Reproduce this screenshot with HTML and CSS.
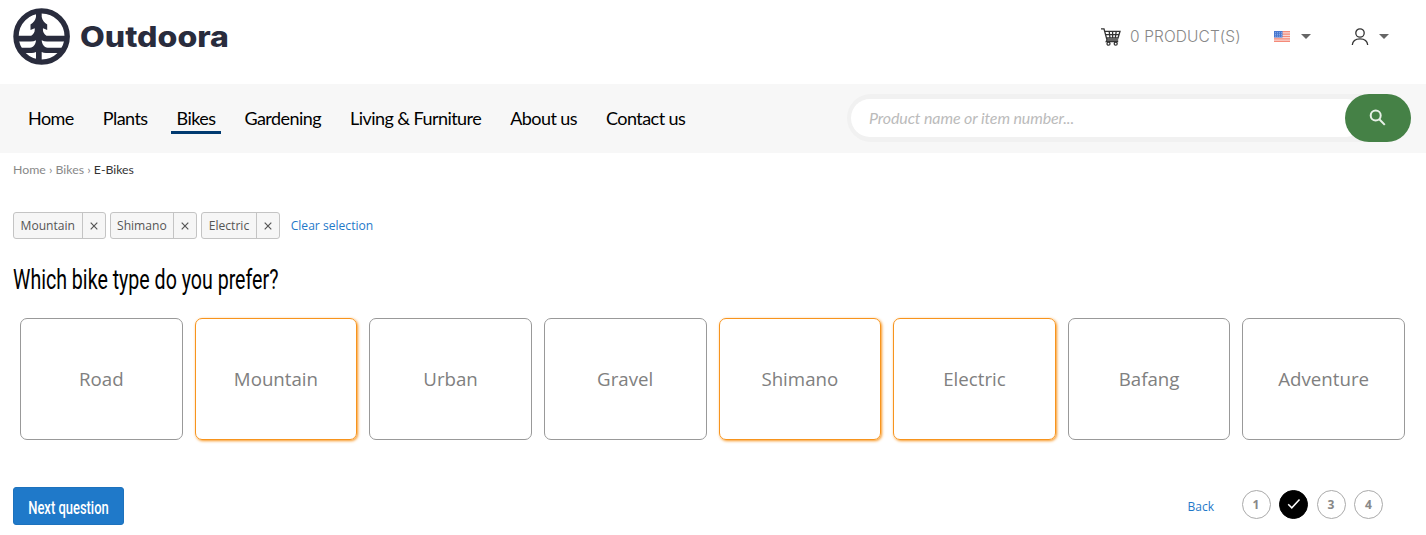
FILE: index.html
```html
<!DOCTYPE html>
<html lang="en">
<head>
    <meta charset="UTF-8">
    <meta name="viewport" content="width=device-width, initial-scale=1.0">
    <title>Outdoora - E-Bikes</title>
    <link rel="stylesheet" href="styles.css">
</head>
<body>
    <header class="header">
        <a class="logo" href="#">
            <svg width="220" height="60" viewBox="0 0 220 60">
                <defs>
                    <clipPath id="logo-circle"><circle cx="28.6" cy="29.5" r="27"/></clipPath>
                </defs>
                <circle cx="28.6" cy="29.5" r="25.6" fill="none" stroke="#292c3d" stroke-width="5.400"/>
                <g clip-path="url(#logo-circle)" fill="#292c3d">
                    <path d="M23 2h5.700v8c.6 3.500 2.500 5.500 5.500 7.500V23l-4.200-1.700c-.4 3.200.8 5.700 3.500 7.400H58V34.500H34c-2 0-3.800-.4-5.300-1.200.3 4.200 2.300 6.900 6 7.500H58v5.200H33c-1.600 0-3-.4-4.300-1.100V58H23V44.900c-1.300.7-2.700 1.100-4.300 1.100H0v-5.200h17c3.700-.6 5.700-3.300 6-7.500-1.500.8-3.300 1.200-5.300 1.200H0v-5.800h18.200c2.700-1.700 3.900-4.200 3.500-7.400L17.500 23v-5.500c3-2 4.900-4 5.500-7.500z"/>
                </g>
                <text class="logo-text" x="67" y="40" textLength="149" lengthAdjust="spacingAndGlyphs">Outdoora</text>
            </svg>
        </a>
        <div class="tools">
            <a class="cart" href="#">
                <svg width="20" height="18" viewBox="0 0 20 18" fill="none" stroke="#333" stroke-width="1.300">
                    <path d="M0 .8h3l3 11.200h11.200M3.700 3.300h15.300l-2 6.700H5.500M4.600 6.600h13.300M8.200 3.300l.8 6.700M11.600 3.300V10M15.200 3.300l-.9 6.700M6 12l-.8 1.700h12"/>
                    <circle cx="7.500" cy="15.700" r="1.500"/>
                    <circle cx="14.700" cy="15.700" r="1.500"/>
                </svg>
                <span class="cart-text">0 PRODUCT(S)</span>
            </a>
            <div class="dropdown language">
                <svg width="16" height="11" viewBox="0 0 16 11">
                    <rect width="16" height="11" fill="#f7d9d6"/>
                    <path d="M0 .7h16M0 3.100h16M0 5.500h16M0 7.900h16M0 10.300h16" stroke="#f58a78" stroke-width="1.200"/>
                    <rect width="8.500" height="6.500" fill="#4878d0"/>
                    <path d="M1 1.700h7M1 3.400h7M1 5.100h7" stroke="#a9c4f2" stroke-width=".7" stroke-dasharray="1 1"/>
                </svg>
                <span class="caret"></span>
            </div>
            <div class="dropdown account">
                <svg width="18" height="18" viewBox="0 0 18 18" fill="none" stroke="#333" stroke-width="1.300">
                    <circle cx="9" cy="5" r="4.200"/>
                    <path d="M1.300 17c.3-4 3.400-6.200 7.700-6.200s7.400 2.200 7.700 6.200"/>
                </svg>
                <span class="caret"></span>
            </div>
        </div>
    </header>

    <div class="navbar">
        <nav class="menu">
            <a href="#">Home</a>
            <a href="#">Plants</a>
            <a class="active" href="#">Bikes</a>
            <a href="#">Gardening</a>
            <a href="#">Living &amp; Furniture</a>
            <a href="#">About us</a>
            <a href="#">Contact us</a>
        </nav>
        <form class="search">
            <input type="text" placeholder="Product name or item number...">
            <button type="button" aria-label="Search">
                <svg width="18" height="18" viewBox="0 0 18 18" fill="none" stroke="#e8f0e8" stroke-width="2">
                    <circle cx="6.700" cy="6.500" r="5"/>
                    <path d="M10.300 10.200l5.500 5.700"/>
                </svg>
            </button>
        </form>
    </div>

    <div class="breadcrumb">Home › Bikes › <span>E-Bikes</span></div>

    <main class="advisor">
        <div class="filters">
            <div class="chip"><span>Mountain</span><button aria-label="Remove"><svg width="8" height="8" viewBox="0 0 8 8"><path d="M.7.7l6.600 6.600M7.300.7L.7 7.300"/></svg></button></div>
            <div class="chip"><span>Shimano</span><button aria-label="Remove"><svg width="8" height="8" viewBox="0 0 8 8"><path d="M.7.7l6.600 6.600M7.300.7L.7 7.300"/></svg></button></div>
            <div class="chip"><span>Electric</span><button aria-label="Remove"><svg width="8" height="8" viewBox="0 0 8 8"><path d="M.7.7l6.600 6.600M7.300.7L.7 7.300"/></svg></button></div>
            <a class="clear" href="#">Clear selection</a>
        </div>

        <h1>Which bike type do you prefer?</h1>

        <div class="answers">
            <div class="answer">Road</div>
            <div class="answer selected">Mountain</div>
            <div class="answer">Urban</div>
            <div class="answer">Gravel</div>
            <div class="answer selected">Shimano</div>
            <div class="answer selected">Electric</div>
            <div class="answer">Bafang</div>
            <div class="answer">Adventure</div>
        </div>

        <div class="footer">
            <button class="next"><span>Next question</span></button>
            <div class="steps">
                <a class="back" href="#">Back</a>
                <span class="step">1</span>
                <span class="step current">
                    <svg width="14" height="12" viewBox="0 0 14 12" fill="none" stroke="#fff" stroke-width="1.500"><path d="M1.200 6.200l3.600 3.600 7.700-8.300"/></svg>
                </span>
                <span class="step">3</span>
                <span class="step">4</span>
            </div>
        </div>
    </main>
</body>
</html>
```
FILE: styles.css
```css
* {
    box-sizing: border-box;
}
body {
    margin: 0;
    background: #fff;
    font-family: "Open Sans", sans-serif;
    color: #000;
    overflow: hidden;
}
a {
    color: inherit;
    text-decoration: none;
}
svg {
    display: block;
    flex-shrink: 0;
}
.header {
    display: flex;
    justify-content: space-between;
    height: 84px;
    padding: 7px 37px 0 13px;
}
.logo-text {
    font-family: Inter, sans-serif;
    font-size: 28px;
    font-weight: 800;
    fill: #292c3d;
}
.tools {
    display: flex;
    align-items: center;
    height: 59px;
}
.cart {
    display: flex;
    align-items: center;
    gap: 9px;
    width: 173px;
}
.cart-text {
    font-family: Inter, sans-serif;
    font-size: 15.5px;
    font-weight: 300;
    letter-spacing: .1px;
    line-height: 18px;
    color: #888;
    white-space: nowrap;
}
.dropdown {
    display: flex;
    align-items: center;
}
.language {
    gap: 11px;
    width: 77px;
}
.account {
    gap: 10px;
}
.caret {
    border: 5px solid transparent;
    border-top-color: #666;
    border-bottom: 0;
}
.navbar {
    display: flex;
    justify-content: space-between;
    align-items: center;
    height: 69px;
    padding: 0 15px 2px 22px;
    background: #f7f7f7;
}
.menu {
    display: flex;
    gap: 17px;
    font-family: Lato, sans-serif;
    font-size: 18px;
    letter-spacing: -.56px;
    line-height: 26px;
}
.menu a {
    padding: 3px 6px 0;
    border-bottom: 3px solid transparent;
    white-space: nowrap;
}
.menu .active {
    border-color: #003a70;
}
.search {
    display: flex;
    width: 564px;
    height: 48px;
    border-radius: 24px;
    background: #f1f1f1;
}
.search input {
    flex: 1;
    min-width: 0;
    height: 38px;
    margin: 5px -20px 5px 4px;
    padding: 0 18px;
    border: 0;
    border-radius: 19px;
    background: #fff;
    font: italic 16px Lato, sans-serif;
    letter-spacing: -.12px;
}
.search input::placeholder {
    color: #bbb;
}
.search button {
    position: relative;
    display: flex;
    align-items: center;
    justify-content: center;
    width: 66px;
    padding: 0;
    border: 0;
    border-radius: 24px;
    background: #458146;
}
.breadcrumb {
    padding: 9px 13px 0;
    font-family: Lato, sans-serif;
    font-size: 12.3px;
    line-height: 16px;
    color: #888;
}
.breadcrumb span {
    color: #333;
}
.advisor {
    padding: 34px 15px 0 13px;
}
.filters {
    display: flex;
    align-items: center;
    gap: 4px;
    height: 27px;
    font-size: 12.1px;
}
.chip {
    display: flex;
    height: 27px;
    border: 1px solid #c4c4c4;
    border-radius: 3px;
    background: #f6f6f6;
    color: #555;
    line-height: 25px;
}
.chip span {
    padding: 0 6.5px;
}
.chip button {
    display: flex;
    align-items: center;
    justify-content: center;
    width: 23px;
    padding: 0;
    border: 0;
    border-left: 1px solid #c4c4c4;
    background: none;
}
.chip path {
    stroke: #555;
    stroke-width: 1.2;
}
.clear {
    margin-left: 7px;
    color: #1f79c9;
}
h1 {
    width: max-content;
    margin: 21px 0 0;
    font-family: Roboto, sans-serif;
    font-size: 28px;
    font-weight: 400;
    line-height: 40px;
    transform: scaleX(.7);
    transform-origin: left;
}
.answers {
    display: grid;
    grid-template-columns: repeat(8, 1fr);
    gap: 12px;
    margin: 18px 6px 0 7px;
}
.answer {
    display: flex;
    align-items: center;
    justify-content: center;
    height: 122px;
    padding-bottom: 1px;
    border: 1px solid #999;
    border-radius: 7px;
    color: #808080;
    font-size: 18.7px;
}
.answer.selected {
    border-color: #f7941d;
    box-shadow: 1px 1px 3px #f7941d;
}
.footer {
    display: flex;
    justify-content: space-between;
    margin-top: 47px;
}
.next {
    display: flex;
    align-items: center;
    justify-content: center;
    width: 111px;
    height: 38px;
    padding: 3px 0 0;
    border: 1px solid #1d72bd;
    border-radius: 3px;
    background: #1f79c9;
    color: #fff;
    font: 500 18.5px Roboto, sans-serif;
}
.next span {
    white-space: nowrap;
    transform: scaleX(.7);
}
.steps {
    display: flex;
    align-items: center;
    gap: 8.5px;
    height: 34px;
    margin-right: 28px;
}
.back {
    margin: 4px 19px 0 0;
    color: #1f79c9;
    font-size: 12px;
}
.step {
    display: flex;
    align-items: center;
    justify-content: center;
    width: 29px;
    height: 29px;
    border: 1px solid #aaa;
    border-radius: 50%;
    color: #888;
    font-size: 12px;
    font-weight: 700;
}
.step.current {
    border-color: #000;
    background: #000;
}
```
